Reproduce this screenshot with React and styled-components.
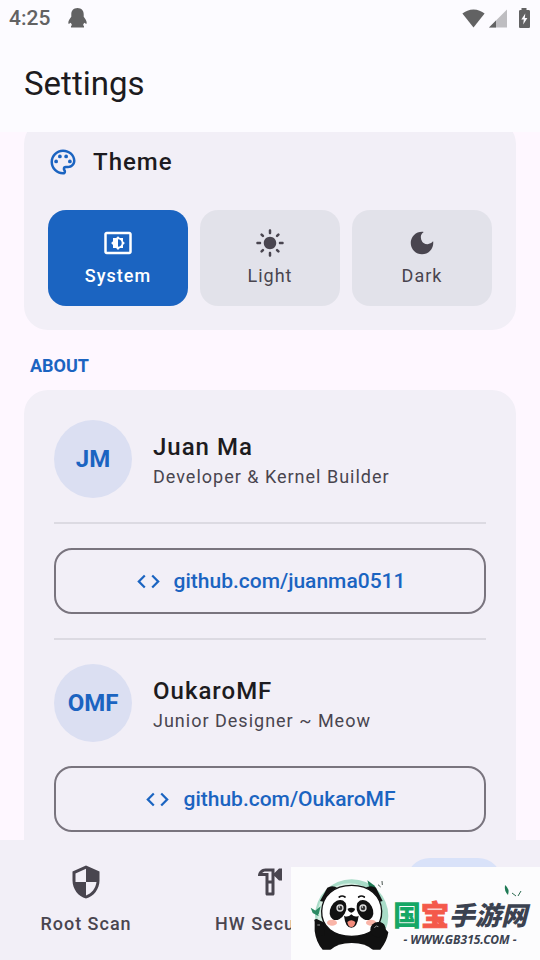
import { useState } from "react";
import styled, { createGlobalStyle } from "styled-components";
import {
  MdCode,
  MdDarkMode,
  MdLightMode,
  MdOutlineHardware,
  MdOutlinePalette,
  MdOutlineSettingsBrightness,
  MdSecurity,
  MdSettings,
} from "react-icons/md";

const THEMES = [
  { id: "system", name: "System", icon: <MdOutlineSettingsBrightness /> },
  { id: "light", name: "Light", icon: <MdLightMode /> },
  { id: "dark", name: "Dark", icon: <MdDarkMode /> },
];

const PEOPLE = [
  { id: "jm", initials: "JM", name: "Juan Ma", role: "Developer & Kernel Builder", link: "github.com/juanma0511" },
  { id: "omf", initials: "OMF", name: "OukaroMF", role: "Junior Designer ~ Meow", link: "github.com/OukaroMF" },
];

const GlobalStyle = createGlobalStyle`
  * {
    box-sizing: border-box;
  }

  body {
    margin: 0;
    background: #fef7ff;
    color: #1d1b20;
    font-family: Roboto, "Noto Sans CJK SC", sans-serif;
  }

  button {
    font-family: inherit;
    border: none;
    padding: 0;
    cursor: pointer;
  }

  h1, h2, h3, p {
    margin: 0;
    font-weight: 400;
  }
`;

const Screen = styled.div`
  display: flex;
  flex-direction: column;
  height: 100vh;
  position: relative;
`;

const TopBar = styled.header`
  background: #fcfbff;
`;

const StatusBar = styled.div`
  display: flex;
  align-items: center;
  gap: 18px;
  height: 36px;
  padding: 0 6px 0 9px;
  color: #626263;
  font-size: 21px;
  font-weight: 500;
  line-height: 36px;

  svg {
    display: block;
  }
`;

const StatusIcons = styled.div`
  display: flex;
  align-items: center;
  gap: 4px;
  margin-left: auto;
`;

const Title = styled.h1`
  padding: 24px;
  font-size: 33px;
  line-height: 48px;
`;

const Content = styled.main`
  flex: 1;
  min-height: 0;
  overflow: hidden;
  padding: 0 24px;
`;

const Card = styled.section`
  background: #f2eff7;
  border-radius: 24px;
  padding: ${(props) => (props.$roomy ? "30px" : "24px")};
`;

const ThemeCard = styled(Card)`
  margin-top: -12px;
`;

const CardHeading = styled.div`
  display: flex;
  align-items: center;
  gap: 15px;
  margin-bottom: 30px;

  svg {
    width: 30px;
    height: 30px;
    color: #1b64c1;
  }

  h2 {
    font-size: 24px;
    font-weight: 500;
    line-height: 36px;
    letter-spacing: 1px;
  }
`;

const ThemeOptions = styled.div`
  display: grid;
  grid-template-columns: repeat(3, 1fr);
  gap: 12px;
`;

const ThemeButton = styled.button`
  display: flex;
  flex-direction: column;
  align-items: center;
  gap: 6px;
  padding: 18px 0;
  border-radius: 18px;
  font-size: 18px;
  line-height: 24px;
  letter-spacing: 1px;
  font-weight: ${(props) => (props.$active ? 500 : 400)};
  background: ${(props) => (props.$active ? "#1b64c1" : "#e2e2ea")};
  color: ${(props) => (props.$active ? "#ffffff" : "#49454f")};

  svg {
    width: 30px;
    height: 30px;
  }
`;

const SectionLabel = styled.h2`
  padding: 24px 6px 12px;
  font-size: 18px;
  font-weight: 700;
  line-height: 24px;
  color: #1b64c1;
`;

const PeopleCard = styled(Card)`
  display: flex;
  flex-direction: column;
  gap: 24px;
`;

const Person = styled.div`
  display: flex;
  align-items: center;
  gap: 21px;
`;

const Avatar = styled.div`
  display: grid;
  place-items: center;
  width: 78px;
  height: 78px;
  border-radius: 50%;
  background: #dbdff2;
  color: #1b64c1;
  font-size: 24px;
  font-weight: 700;
`;

const Name = styled.h3`
  font-size: 24px;
  font-weight: 500;
  line-height: 36px;
  letter-spacing: 1px;
`;

const Role = styled.p`
  font-size: 18px;
  line-height: 24px;
  letter-spacing: 1px;
  color: #49454f;
`;

const Divider = styled.hr`
  width: 100%;
  height: 2px;
  margin: 0;
  border: none;
  background: #dcdae2;
`;

const LinkButton = styled.a`
  display: flex;
  align-items: center;
  justify-content: center;
  gap: 12px;
  height: 66px;
  border: 2px solid #79747e;
  border-radius: 18px;
  color: #1b64c1;
  font-size: 21px;
  font-weight: 500;
  text-decoration: none;

  svg {
    width: 27px;
    height: 27px;
  }
`;

const NavBar = styled.nav`
  display: grid;
  grid-template-columns: repeat(3, 1fr);
  gap: 12px;
  padding: 18px 0 24px;
  background: #f2eff7;
`;

const NavItem = styled.button`
  display: flex;
  flex-direction: column;
  align-items: center;
  gap: 6px;
  min-height: 78px;
  background: none;
  color: #49454f;
  font-size: 18px;
  font-weight: 500;
  line-height: 24px;
  letter-spacing: 1px;
  white-space: nowrap;
`;

const NavIcon = styled.span`
  display: grid;
  place-items: center;
  width: 96px;
  height: 48px;
  border-radius: 24px;
  background: ${(props) => (props.$active ? "#d9e2f9" : "transparent")};

  svg {
    width: 36px;
    height: 36px;
  }
`;

const Watermark = styled.aside`
  position: absolute;
  right: 0;
  bottom: 0;
  display: flex;
  align-items: center;
  gap: 3px;
  width: 249px;
  height: 93px;
  padding-left: 16px;
  background: #fcfcfd;
`;

const Brand = styled.div`
  position: relative;
  padding-top: 16px;
`;

const BrandName = styled.div`
  display: flex;
  align-items: center;
  font-family: "Noto Sans CJK SC", sans-serif;
  font-size: 26px;
  font-style: italic;
  font-weight: 900;
  line-height: 36px;
  color: #3b4250;
`;

const BrandBig = styled.span`
  font-size: 28px;
  font-style: normal;
  color: ${(props) => props.$color};
  -webkit-text-stroke: ${(props) => (props.$heavy ? "1px currentColor" : "0")};
`;

const BrandUrl = styled.div`
  font-family: "Noto Sans", sans-serif;
  font-size: 12px;
  font-style: italic;
  font-weight: 700;
  line-height: 16px;
  text-align: center;
  color: #3b4250;
`;

const Leaves = styled.svg`
  position: absolute;
  top: 4px;
  right: 4px;
`;

function Penguin() {
  return (
    <svg width="19" height="20" viewBox="0 0 19 20" fill="currentColor" aria-hidden="true">
      <path d="M9.500 0C5.500 0 3.300 2.800 3.300 6.300v2.500C1.800 10.600.3 12.800.3 14.900c0 .9.6 1 1.200.6l1.400-.8c.3 1 .6 1.700 1.100 2.300-.8.5-1.200 1.300-1 2.500h13c.2-1.200-.2-2-1-2.500.5-.6.8-1.300 1.100-2.300l1.400.8c.6.4 1.200.3 1.200-.6 0-2.100-1.500-4.300-3-6.100V6.300C15.700 2.800 13.500 0 9.500 0z" />
    </svg>
  );
}

function Panda() {
  return (
    <svg width="83" height="84" viewBox="81 105 249 252" aria-hidden="true">
      <circle cx="215" cy="237" r="110" fill="#a9dcc8" />
      <circle cx="208" cy="235" r="96" fill="#d7eee3" />
      <path d="M262 130l22 16 6 12-22-6z" fill="#1f7a55" />
      <path d="M92 212l20 12 4 14-18-10zM100 226l22-18-6 24z" fill="#2b8a63" />
      <path d="M294 143l8 7M306 132l1 12" stroke="#4a5550" strokeWidth="3" />
      <path d="M104 254q-4-8 6-8l30 14 120 20 22-16q6-12 20-8 14 4 14 20l9 10q-4 28-24 52H128q-20-22-24-56z" fill="#111" />
      <path d="M150 357v-17q22-22 65-22t65 22v17z" fill="#fcfcfd" />
      <path d="M120 192l22-40q16-10 32 2l-28 44z" fill="#111" />
      <path d="M308 192l-20-40q-16-10-34 2l32 44z" fill="#111" />
      <path d="M215 145c54 0 88 32 90 77 2 48-38 76-90 76s-92-28-90-76c2-45 36-77 90-77z" fill="#fff" stroke="#111" strokeWidth="4" />
      <path d="M178 180q8-6 17 0M236 180q8-6 17 0" stroke="#111" strokeWidth="5" strokeLinecap="round" fill="none" />
      <ellipse cx="174" cy="219" rx="23" ry="32" transform="rotate(28 174 219)" fill="#111" />
      <ellipse cx="255" cy="219" rx="23" ry="32" transform="rotate(-28 255 219)" fill="#111" />
      <circle cx="180" cy="213" r="11" fill="#ddd" />
      <circle cx="249" cy="213" r="11" fill="#ddd" />
      <circle cx="180" cy="213" r="7" fill="#333" />
      <circle cx="249" cy="213" r="7" fill="#333" />
      <circle cx="178" cy="210" r="2" fill="#fff" />
      <circle cx="247" cy="210" r="2" fill="#fff" />
      <path d="M203 215q11-6 22 0 0 8-11 12-11-4-11-12z" fill="#111" />
      <path d="M192 236q11 7 22-4 11 11 22 4-4 36-22 36t-22-36z" fill="#111" />
      <path d="M202 255q12-10 24 0-2 15-12 15t-12-15z" fill="#f58c7c" />
      <ellipse cx="156" cy="257" rx="15" ry="9" fill="#f9b5a8" />
      <ellipse cx="273" cy="257" rx="15" ry="9" fill="#f9b5a8" />
      <circle cx="294" cy="278" r="23" fill="#111" />
      <path d="M106 256q14-10 24 4l4 34-24 4z" fill="#111" />
      <path d="M112 264h8M283 272q6-8 12-3" stroke="#ddd" strokeWidth="2" fill="none" />
    </svg>
  );
}

function PhoneStatus() {
  return (
    <StatusBar>
      <span>4:25</span>
      <Penguin />
      <StatusIcons>
        <svg width="23" height="19" viewBox="0 0 23 19" fill="currentColor" aria-hidden="true">
          <path d="M11.500 18.500L.4 4.600C3.300 2 7.200.4 11.500.4s8.200 1.600 11.100 4.200z" />
        </svg>
        <svg width="18" height="19" viewBox="0 0 18 19" aria-hidden="true">
          <path d="M0 18.500L18 .5v18z" fill="#bebdc1" />
          <path d="M0 18.500l7-7v7z" fill="currentColor" />
        </svg>
        <svg width="23" height="20" viewBox="0 0 23 20" aria-hidden="true">
          <path d="M10.500 0h5v2h2.200c.7 0 1.300.6 1.300 1.300v15.400c0 .7-.6 1.300-1.300 1.300H9.300C8.600 20 8 19.400 8 18.700V3.300C8 2.600 8.600 2 9.300 2h1.200z" fill="currentColor" />
          <path d="M14.300 5.500l-4 6h2.500l-.6 5 4.200-6.500h-2.600z" fill="#fcfbff" />
        </svg>
      </StatusIcons>
    </StatusBar>
  );
}

export default function App() {
  const [theme, setTheme] = useState("system");

  return (
    <Screen>
      <GlobalStyle />
      <TopBar>
        <PhoneStatus />
        <Title>Settings</Title>
      </TopBar>

      <Content>
        <ThemeCard>
          <CardHeading>
            <MdOutlinePalette />
            <h2>Theme</h2>
          </CardHeading>
          <ThemeOptions>
            {THEMES.map(({ id, name, icon }) => (
              <ThemeButton
                key={id}
                type="button"
                $active={theme === id}
                aria-pressed={theme === id}
                onClick={() => setTheme(id)}
              >
                {icon}
                {name}
              </ThemeButton>
            ))}
          </ThemeOptions>
        </ThemeCard>

        <SectionLabel>ABOUT</SectionLabel>

        <PeopleCard $roomy>
          {PEOPLE.map(({ id, initials, name, role, link }, index) => [
            index > 0 && <Divider key={`${id}-top`} />,
            <Person key={id}>
              <Avatar>{initials}</Avatar>
              <div>
                <Name>{name}</Name>
                <Role>{role}</Role>
              </div>
            </Person>,
            index === 0 && <Divider key={`${id}-line`} />,
            <LinkButton key={`${id}-link`} href={`https://${link}`}>
              <MdCode />
              {link}
            </LinkButton>,
          ])}
        </PeopleCard>
      </Content>

      <NavBar>
        <NavItem type="button">
          <NavIcon><MdSecurity /></NavIcon>
          Root Scan
        </NavItem>
        <NavItem type="button">
          <NavIcon><MdOutlineHardware /></NavIcon>
          HW Security
        </NavItem>
        <NavItem type="button" aria-label="Settings" aria-current="page">
          <NavIcon $active><MdSettings /></NavIcon>
        </NavItem>
      </NavBar>

      <Watermark>
        <Panda />
        <Brand>
          <Leaves width="20" height="14" viewBox="0 0 20 14" aria-hidden="true">
            <path d="M2 1q5 4 3 10Q1 7 2 1z" fill="#1f7a55" />
            <path d="M9 9l4 3M18 7l-3 5" stroke="#2b6a50" strokeWidth="1" />
          </Leaves>
          <BrandName>
            <BrandBig $color="#16a765">国</BrandBig>
            <BrandBig $color="#f4594a" $heavy>宝</BrandBig>
            手游网
          </BrandName>
          <BrandUrl>- WWW.GB315.COM -</BrandUrl>
        </Brand>
      </Watermark>
    </Screen>
  );
}
